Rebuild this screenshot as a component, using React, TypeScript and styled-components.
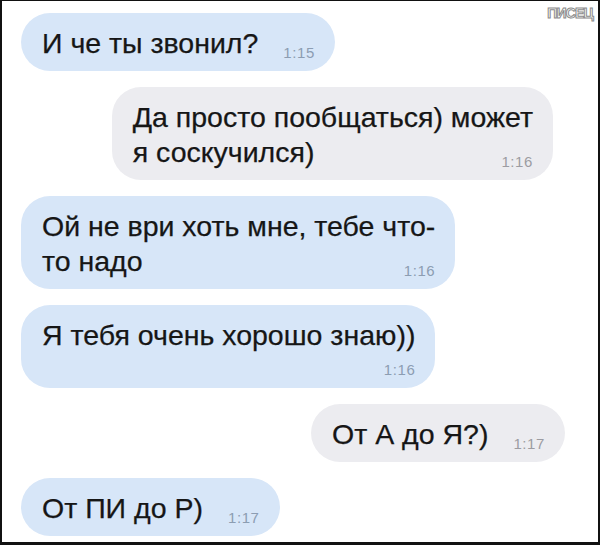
import React from 'react';
import styled, { createGlobalStyle } from 'styled-components';

type Side = 'left' | 'right';

type Message = {
  side: Side;
  lines: string[];
  time: string;
  stacked?: boolean;
  inset?: number;
};

const messages: Message[] = [
  { side: 'left', lines: ['И че ты звонил?'], time: '1:15' },
  { side: 'right', lines: ['Да просто пообщаться) может', 'я соскучился)'], time: '1:16', inset: 12 },
  { side: 'left', lines: ['Ой не ври хоть мне, тебе что-', 'то надо'], time: '1:16' },
  { side: 'left', lines: ['Я тебя очень хорошо знаю))'], time: '1:16', stacked: true },
  { side: 'right', lines: ['От А до Я?)'], time: '1:17' },
  { side: 'left', lines: ['От ПИ до Р)'], time: '1:17' },
];

const GlobalStyle = createGlobalStyle`
  html, body {
    margin: 0;
    padding: 0;
    background: #fff;
  }
  body {
    font-family: "Liberation Sans", Arial, sans-serif;
  }
`;

const Frame = styled.div`
  position: relative;
  box-sizing: border-box;
  width: 600px;
  height: 545px;
  background: #fff;
  border-style: solid;
  border-color: #111;
  border-width: 1px 2px 3px 2px;
  padding: 12px 33px 0 19px;
  display: flex;
  flex-direction: column;
  gap: 16px;
  overflow: hidden;
`;

const Watermark = styled.div`
  position: absolute;
  top: 4px;
  right: 5px;
  font-family: "Liberation Sans", Arial, sans-serif;
  font-weight: 700;
  font-size: 14px;
  letter-spacing: -0.8px;
  color: #fff;
  -webkit-text-stroke: 1px #8a8a8a;
`;

const Bubble = styled.div<{ $side: Side; $inset: number }>`
  align-self: ${p => (p.$side === 'left' ? 'flex-start' : 'flex-end')};
  margin-right: ${p => p.$inset}px;
  display: flex;
  flex-direction: column;
  padding: 13px 20px 10px 21px;
  border-radius: 29px;
  background: ${p => (p.$side === 'left' ? '#d7e6f8' : '#ececf0')};
  color: #161616;
`;

const Line = styled.div`
  font-size: 28.5px;
  line-height: 35px;
  white-space: nowrap;
  -webkit-text-stroke: 0.25px #161616;
`;

const LastRow = styled.div<{ $stacked: boolean }>`
  display: flex;
  flex-direction: ${p => (p.$stacked ? 'column' : 'row')};
  justify-content: space-between;
  align-items: flex-end;
  gap: ${p => (p.$stacked ? '9px' : '25px')};

  & > ${Line} {
    align-self: ${p => (p.$stacked ? 'flex-start' : 'auto')};
  }
`;

const Time = styled.span<{ $side: Side }>`
  font-size: 15px;
  line-height: 15px;
  letter-spacing: 0.6px;
  margin-bottom: 1px;
  color: ${p => (p.$side === 'left' ? '#8c9db2' : '#9c9ca2')};
`;

const ChatBubble: React.FC<{ message: Message }> = ({ message }) => {
  const { side, lines, time, stacked, inset } = message;
  const head = lines.slice(0, -1);
  const last = lines[lines.length - 1];

  return (
    <Bubble $side={side} $inset={inset ?? 0}>
      {head.map(line => (
        <Line key={line}>{line}</Line>
      ))}
      <LastRow $stacked={!!stacked}>
        <Line>{last}</Line>
        <Time $side={side}>{time}</Time>
      </LastRow>
    </Bubble>
  );
};

const App: React.FC = () => (
  <>
    <GlobalStyle />
    <Frame>
      <Watermark>ПИСЕЦ</Watermark>
      {messages.map((m, i) => (
        <ChatBubble key={i} message={m} />
      ))}
    </Frame>
  </>
);

export default App;
